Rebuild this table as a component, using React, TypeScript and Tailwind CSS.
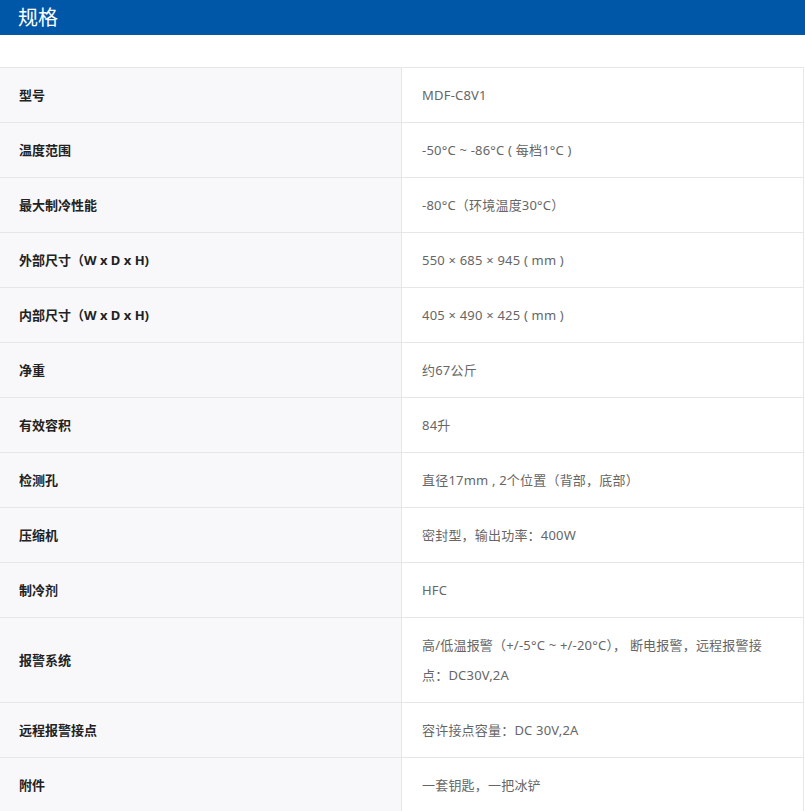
const specs: [string, string][] = [
  ["型号", "MDF-C8V1"],
  ["温度范围", "-50°C ~ -86°C ( 每档1°C )"],
  ["最大制冷性能", "-80°C（环境温度30°C）"],
  ["外部尺寸（W x D x H)", "550 × 685 × 945 ( mm )"],
  ["内部尺寸（W x D x H)", "405 × 490 × 425 ( mm )"],
  ["净重", "约67公斤"],
  ["有效容积", "84升"],
  ["检测孔", "直径17mm , 2个位置（背部，底部）"],
  ["压缩机", "密封型，输出功率：400W"],
  ["制冷剂", "HFC"],
  ["报警系统", "高/低温报警（+/-5°C ~ +/-20°C）， 断电报警，远程报警接点：DC30V,2A"],
  ["远程报警接点", "容许接点容量：DC 30V,2A"],
  ["附件", "一套钥匙，一把冰铲"],
];

export default function App() {
  return (
    <div
      className="w-[805px] bg-white"
      style={{ fontFamily: '"Noto Sans", "Noto Sans CJK SC", sans-serif' }}
    >
      <div className="h-[35px] bg-[#0057a8] pl-[18px] flex items-center">
        <h2 className="text-[20px] text-white leading-none">规格</h2>
      </div>
      <div className="h-[32px]" />
      <div className="w-[804px] border-t border-r border-[#e6e6e8]">
        {specs.map(([label, value]) => (
          <div key={label} className="flex border-b border-[#e6e6e8]">
            <div className="w-[402px] shrink-0 bg-[#f8f8fa] border-r border-[#e6e6e8] pl-[19px] pr-5 py-3 flex items-center text-[13px] leading-[30px] font-bold text-[#222]">
              {label}
            </div>
            <div className="flex-1 pl-5 pr-4 py-3 text-[13px] leading-[30px] tracking-[0.2px] text-[#666]">
              {value}
            </div>
          </div>
        ))}
      </div>
    </div>
  );
}
